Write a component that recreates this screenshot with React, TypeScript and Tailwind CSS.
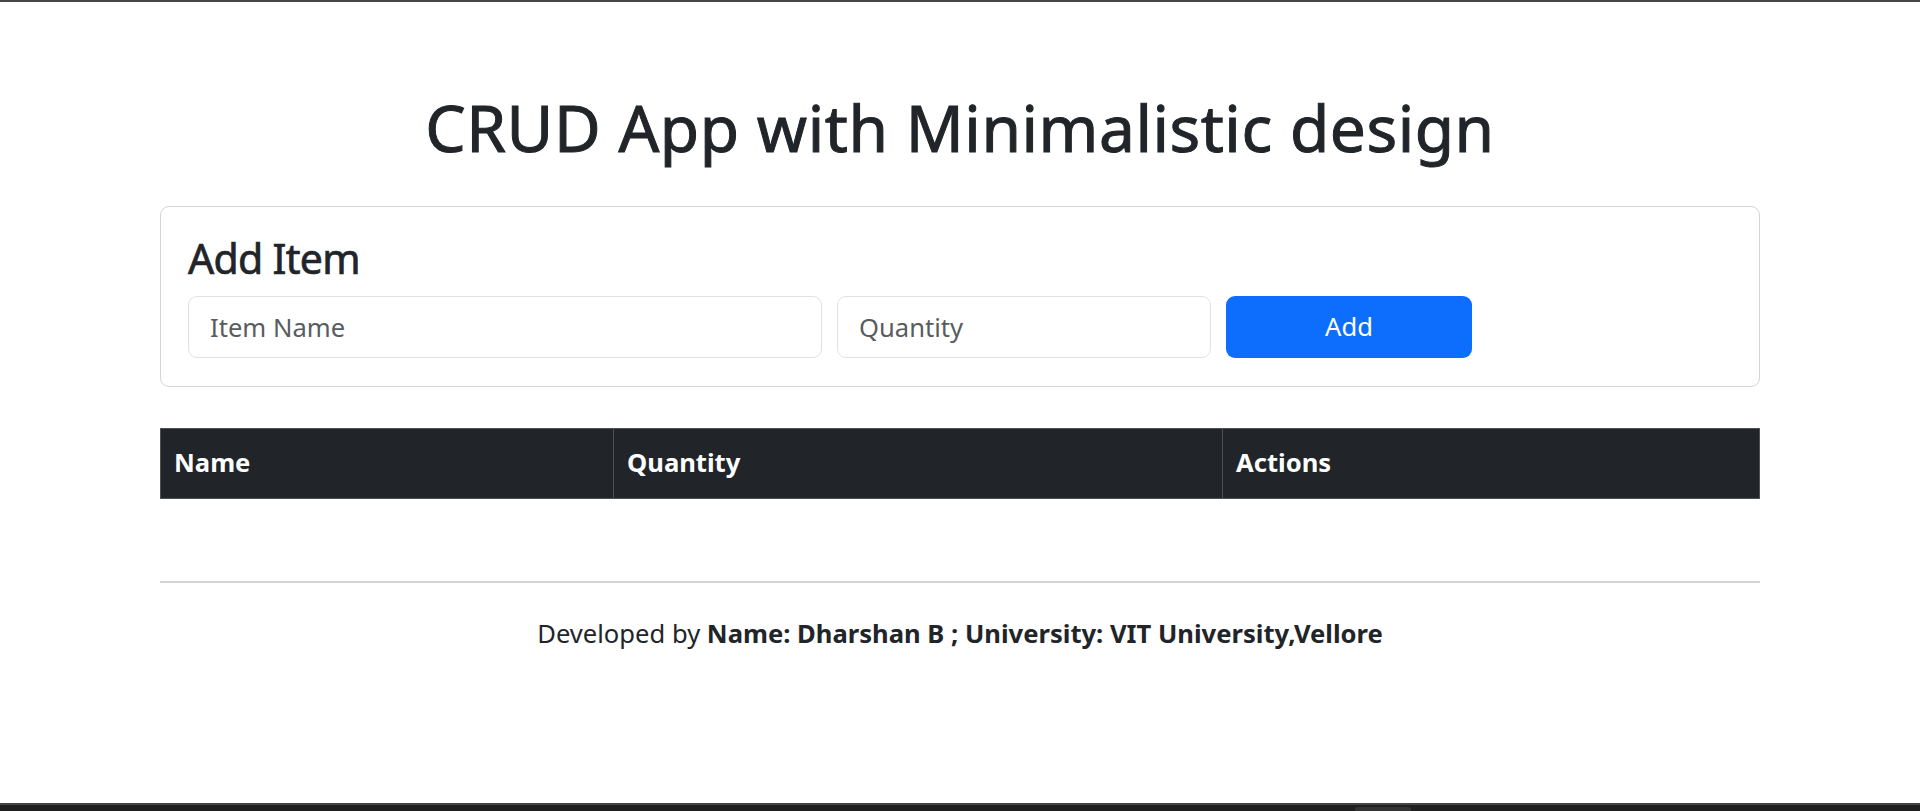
import React from "react";

const font = { fontFamily: '"Noto Sans", "Open Sans", Arial, sans-serif' };

export default function App() {
  return (
    <div className="min-h-screen flex flex-col bg-white text-[#212529]" style={font}>
      <div className="h-[2px] bg-[#454545]" />
      <main className="flex-1 flex flex-col px-[160px]">
        <h1 className="mt-[87px] text-center text-[64px] leading-[77px] font-normal tracking-[0.55px] [-webkit-text-stroke:1px_#212529]">
          CRUD App with Minimalistic design
        </h1>
        <section className="mt-[40px] border border-[#d5d5d5] rounded-[9px] px-[27px] pt-[24px] pb-[28px]">
          <h3 className="text-[41px] leading-[54px] font-normal tracking-[-0.7px] [-webkit-text-stroke:0.7px_#212529]">Add Item</h3>
          <div className="mt-[11px] flex gap-[15px]">
            <input
              className="w-[634px] h-[62px] border border-[#dee2e6] rounded-[9px] px-[21px] text-[25.6px] placeholder:text-[#595c5f] outline-none"
              placeholder="Item Name"
            />
            <input
              className="w-[374px] h-[62px] border border-[#dee2e6] rounded-[9px] px-[21px] text-[25.6px] placeholder:text-[#595c5f] outline-none"
              placeholder="Quantity"
            />
            <button className="w-[246px] h-[62px] rounded-[9px] bg-[#0d6efd] text-white text-[25.6px]">
              Add
            </button>
          </div>
        </section>
        <table className="mt-[41px] w-full border-collapse">
          <thead>
            <tr className="bg-[#212529] text-white text-[25.6px] font-bold text-left">
              <th className="w-[453px] h-[70px] px-[13px] border border-[#4d5154]">Name</th>
              <th className="w-[609px] h-[70px] px-[13px] border border-[#4d5154]">Quantity</th>
              <th className="h-[70px] px-[13px] border border-[#4d5154]">Actions</th>
            </tr>
          </thead>
          <tbody />
        </table>
        <hr className="mt-[82px] border-0 h-[1.5px] bg-[#d3d3d4]" />
        <p className="mt-[32px] text-center text-[25.6px] leading-[38px]">
          Developed by <strong className="font-bold">Name: Dharshan B ; University: VIT University,Vellore</strong>
        </p>
      </main>
      <div className="h-[8px] flex flex-col bg-[#1f1f1f]">
        <div className="h-[2px] bg-[#454545]" />
        <div className="flex-1 flex items-end">
          <div className="ml-[1355px] w-[56px] h-[4px] rounded-t-[3px] bg-[#333333]" />
        </div>
      </div>
    </div>
  );
}
